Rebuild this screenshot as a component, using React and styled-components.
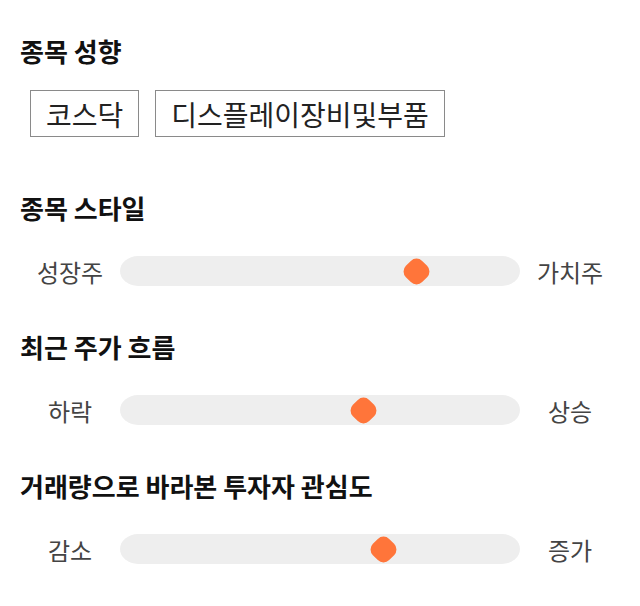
import React from "react";
import styled, { createGlobalStyle } from "styled-components";

const GlobalStyle = createGlobalStyle`
  body {
    margin: 0;
    background: #fff;
    font-family: "Noto Sans CJK KR", "Noto Sans", sans-serif;
  }
`;

const Page = styled.div`
  display: flex;
  flex-direction: column;
  padding: 34px 20px 0 20px;
`;

const Section = styled.section`
  display: flex;
  flex-direction: column;
  margin-bottom: ${(p) => p.gap || 39}px;
`;

const Title = styled.h2`
  margin: 0 0 ${(p) => p.below || 26}px;
  font-size: 26px;
  line-height: 34px;
  font-weight: 700;
  color: #111;
`;

const Tags = styled.div`
  display: flex;
  gap: 16px;
  padding-left: 10px;
`;

const Tag = styled.div`
  box-sizing: border-box;
  display: flex;
  align-items: center;
  height: 47px;
  padding: 0 15px;
  border: 1px solid #8a8a8a;
  font-size: 28px;
  color: #222;
`;

const SliderRow = styled.div`
  display: grid;
  grid-template-columns: 100px 400px 100px;
  align-items: center;
  height: 40px;
`;

const Label = styled.span`
  text-align: center;
  font-size: 24px;
  color: #444;
`;

const Track = styled.div`
  position: relative;
  height: 30px;
  background: #eeeeee;
  border-radius: 18px / 15px;
`;

const Thumb = styled.div`
  position: absolute;
  top: 50%;
  width: 23px;
  height: 23px;
  margin: -11.5px 0 0 -11.5px;
  background: #ff753a;
  border-radius: 8px;
  transform: rotate(45deg);
`;

const sliders = [
  { title: "종목 스타일", left: "성장주", right: "가치주", at: 296 },
  { title: "최근 주가 흐름", left: "하락", right: "상승", at: 243 },
  { title: "거래량으로 바라본 투자자 관심도", left: "감소", right: "증가", at: 263 },
];

export default function App() {
  return (
    <>
      <GlobalStyle />
      <Page>
        <Section gap={54}>
          <Title below={22}>종목 성향</Title>
          <Tags>
            <Tag>코스닥</Tag>
            <Tag>디스플레이장비및부품</Tag>
          </Tags>
        </Section>
        {sliders.map((s) => (
          <Section key={s.title}>
            <Title>{s.title}</Title>
            <SliderRow>
              <Label>{s.left}</Label>
              <Track>
                <Thumb style={{ left: s.at }} />
              </Track>
              <Label>{s.right}</Label>
            </SliderRow>
          </Section>
        ))}
      </Page>
    </>
  );
}
